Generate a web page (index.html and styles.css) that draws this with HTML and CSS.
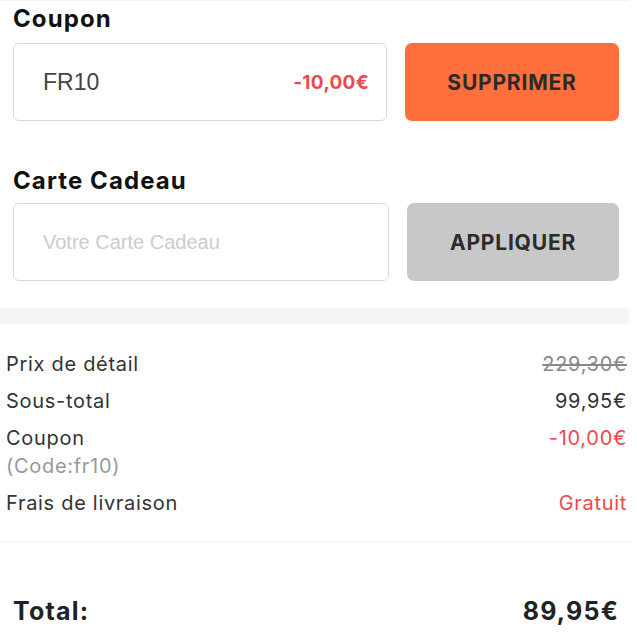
FILE: index.html
```html
<!DOCTYPE html>
<html lang="fr">
<head>
    <meta charset="UTF-8">
    <meta name="viewport" content="width=device-width, initial-scale=1.0">
    <title>Panier - Récapitulatif</title>
    <link rel="stylesheet" href="styles.css">
</head>
<body>

<div class="page">
    <section class="promo">
        <h2>Coupon</h2>
        <div class="promo-row">
            <div class="field">
                <span class="code">FR10</span>
                <span class="discount">-10,00€</span>
            </div>
            <button class="btn btn-remove">SUPPRIMER</button>
        </div>
    </section>

    <section class="promo gift">
        <h2>Carte Cadeau</h2>
        <div class="promo-row">
            <input type="text" class="field" placeholder="Votre Carte Cadeau">
            <button class="btn btn-apply">APPLIQUER</button>
        </div>
    </section>

    <div class="band"></div>

    <div class="summary">
        <div class="line">
            <span>Prix de détail</span>
            <span class="old">229,30€</span>
        </div>
        <div class="line">
            <span>Sous-total</span>
            <span>99,95€</span>
        </div>
        <div class="line">
            <span>Coupon<br><small>(Code:fr10)</small></span>
            <span class="red">-10,00€</span>
        </div>
        <div class="line">
            <span>Frais de livraison</span>
            <span class="red">Gratuit</span>
        </div>
    </div>

    <div class="total">
        <span>Total:</span>
        <span>89,95€</span>
    </div>
</div>

</body>
</html>
```

FILE: styles.css
```css
body {
    font-family: "Inter", "Liberation Sans", sans-serif;
    background-color: #fff;
    color: #333;
    margin: 0;
    padding: 0;
}
.page {
    width: 629px;
    border-top: 1px solid #f2f2f2;
}
.promo {
    padding: 0 10px 0 13px;
}
.promo h2 {
    font-size: 24px;
    font-weight: 700;
    letter-spacing: 1.1px;
    line-height: 30px;
    color: #111;
    margin: 3px 0 9px;
}
.gift {
    margin-top: 45px;
}
.gift h2 {
    margin-bottom: 7px;
}
.promo-row {
    display: flex;
    gap: 18px;
}
.field {
    flex: 1;
    height: 78px;
    box-sizing: border-box;
    border: 1px solid #d9d9d9;
    border-radius: 6px;
    padding: 0 17px 0 29px;
    display: flex;
    align-items: center;
    justify-content: space-between;
    font-family: "Liberation Sans", Arial, sans-serif;
    font-size: 23px;
    color: #444;
}
input.field {
    font-size: 20px;
    outline: none;
}
input.field::placeholder {
    color: #ccc;
}
.discount {
    font-family: "Inter", sans-serif;
    color: #f0484e;
    font-weight: 700;
    font-size: 19px;
    letter-spacing: 0.3px;
}
.btn {
    width: 214px;
    height: 78px;
    border: none;
    border-radius: 7px;
    font-family: "Inter", sans-serif;
    font-size: 21px;
    font-weight: 700;
    letter-spacing: 0.8px;
    color: #2b2b2b;
    cursor: pointer;
}
.btn-remove {
    background-color: #ff6f3b;
}
.btn-apply {
    width: 212px;
    background-color: #c8c8c8;
}
.band {
    height: 16px;
    background-color: #f4f5f7;
    margin-top: 27px;
}
.summary {
    padding: 26px 2px 15px 6px;
    border-bottom: 1px solid #eee;
}
.line {
    display: flex;
    justify-content: space-between;
    font-size: 20px;
    letter-spacing: 0.7px;
    line-height: 28px;
    margin-bottom: 9px;
}
.line small {
    font-size: 20px;
    color: #999;
}
.old {
    color: #888;
    text-decoration: line-through;
}
.red {
    color: #f0484e;
}
.total {
    display: flex;
    justify-content: space-between;
    padding: 54px 10px 0 13px;
    font-size: 25px;
    font-weight: 700;
    letter-spacing: 1.2px;
    color: #222;
}
```
